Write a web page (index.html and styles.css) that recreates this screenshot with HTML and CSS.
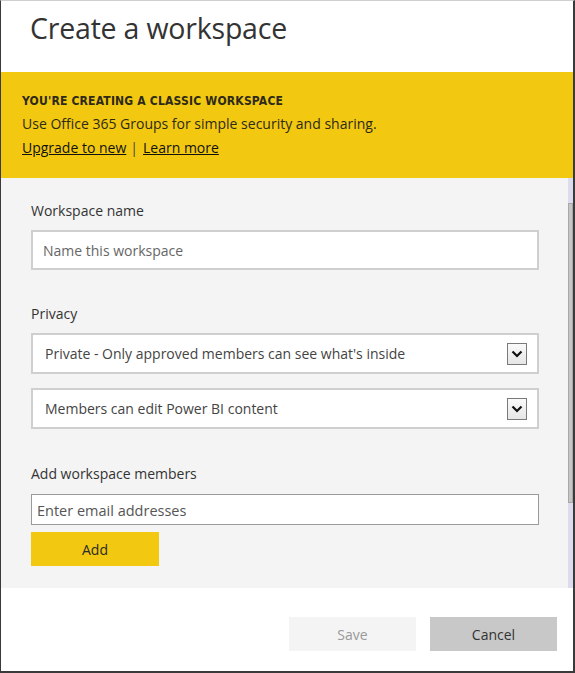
FILE: index.html
```html
<!DOCTYPE html>
<html>
<head>
<meta charset="utf-8">
<link rel="stylesheet" href="styles.css">
</head>
<body>
<div class="dialog">
  <header class="head">
    <h1 class="title">Create a workspace</h1>
  </header>
  <section class="banner">
    <div class="banner-title">YOU'RE CREATING A CLASSIC WORKSPACE</div>
    <div class="banner-text">Use Office 365 Groups for simple security and sharing.</div>
    <div class="banner-links"><a class="link">Upgrade to new</a><span class="sep">|</span><a class="link">Learn more</a></div>
  </section>
  <div class="body">
    <div class="content">
      <div class="label first">Workspace name</div>
      <div class="field name"><span class="ph">Name this workspace</span></div>

      <div class="label privacy">Privacy</div>
      <div class="field select"><span class="val">Private - Only approved members can see what's inside</span>
        <span class="arrow"><svg width="12" height="8" viewBox="0 0 12 8"><path d="M1.5 1.5 L6 6 L10.5 1.5" fill="none" stroke="#111" stroke-width="2.2"/></svg></span>
      </div>
      <div class="field select second"><span class="val">Members can edit Power BI content</span>
        <span class="arrow"><svg width="12" height="8" viewBox="0 0 12 8"><path d="M1.5 1.5 L6 6 L10.5 1.5" fill="none" stroke="#111" stroke-width="2.2"/></svg></span>
      </div>

      <div class="label members">Add workspace members</div>
      <div class="field email"><span class="ph dark">Enter email addresses</span></div>
      <div class="add">Add</div>
    </div>
    <div class="scrollbar"><div class="thumb"></div></div>
  </div>
  <footer class="foot">
    <div class="btn save">Save</div>
    <div class="btn cancel">Cancel</div>
  </footer>
</div>
</body>
</html>
```

FILE: styles.css
```css
* { box-sizing: border-box; }
html, body { margin: 0; padding: 0; background: #fff; }
body { font-family: "Open Sans", "Noto Sans", sans-serif; color: #333; }

.dialog {
  width: 575px;
  height: 673px;
  border-left: 1px solid #3a3a3a;
  border-right: 2px solid #3a3a3a;
  border-bottom: 2px solid #3a3a3a;
  border-top: 1px solid #cfcfcf;
  display: flex;
  flex-direction: column;
  background: #fff;
}

.head {
  height: 71px;
  padding: 8px 0 0 29px;
}
.title {
  margin: 0;
  font-weight: 400;
  font-size: 28.5px;
  color: #333;
  letter-spacing: -0.2px;
}

.banner {
  height: 106px;
  background: #f2c811;
  padding: 21px 0 0 21px;
}
.banner-title {
  font-family: "DejaVu Sans Condensed", "Roboto", sans-serif;
  font-weight: bold;
  font-size: 12px;
  color: #2e2a1a;
  letter-spacing: 0.2px;
  line-height: 16px;
}
.banner-text {
  font-size: 14px;
  line-height: 22px;
  margin-top: 4px;
  color: #2e2a1a;
}
.banner-links {
  font-size: 14px;
  line-height: 22px;
  margin-top: 2px;
  color: #111;
}
.link { text-decoration: underline; color: #111; }
.sep { margin: 0 5px 0 4px; color: #444; }

.body {
  height: 410px;
  background: #f4f4f4;
  display: flex;
}
.content {
  flex: 1;
  padding: 0 29px 0 30px;
}
.scrollbar {
  width: 5px;
  background: #dcdcee;
  padding-top: 25px;
}
.thumb {
  height: 300px;
  background: #c6c6c6;
  border: 1px solid #a8a8a8;
}

.label {
  font-size: 14px;
  color: #333;
  line-height: 20px;
}
.label.first { margin-top: 23px; }
.label.privacy { margin-top: 34px; }
.label.members { margin-top: 35px; }

.field {
  background: #fff;
  border: 2px solid #cfcfcf;
  display: flex;
  align-items: center;
  font-size: 14px;
}
.field.name { height: 40px; margin-top: 9px; padding-left: 10px; }
.ph { color: #666; }
.ph.dark { color: #555; }
.field.select { height: 41px; margin-top: 9px; padding-left: 12px; padding-right: 10px; justify-content: space-between; }
.field.select.second { margin-top: 14px; }
.val { color: #444; }
.arrow {
  width: 20px;
  height: 22px;
  border: 1px solid #7a7a7a;
  background: linear-gradient(#fafafa, #e6e6e6);
  display: flex;
  align-items: center;
  justify-content: center;
}
.field.email {
  height: 31px;
  margin-top: 10px;
  border: 1px solid #9a9a9a;
  padding-left: 5px;
  padding-top: 2px;
  font-size: 14.5px;
}
.add {
  width: 128px;
  height: 34px;
  margin-top: 7px;
  background: #f2c811;
  display: flex;
  align-items: center;
  justify-content: center;
  font-size: 14px;
  color: #2a2a2a;
}

.foot {
  flex: 1;
  display: flex;
  justify-content: flex-end;
  gap: 14px;
  padding: 29px 16px 0 0;
}
.btn {
  width: 127px;
  height: 34px;
  display: flex;
  align-items: center;
  justify-content: center;
  font-size: 14px;
}
.save { background: #f4f4f4; color: #999; }
.cancel { background: #c8c8c8; color: #333; }
```
